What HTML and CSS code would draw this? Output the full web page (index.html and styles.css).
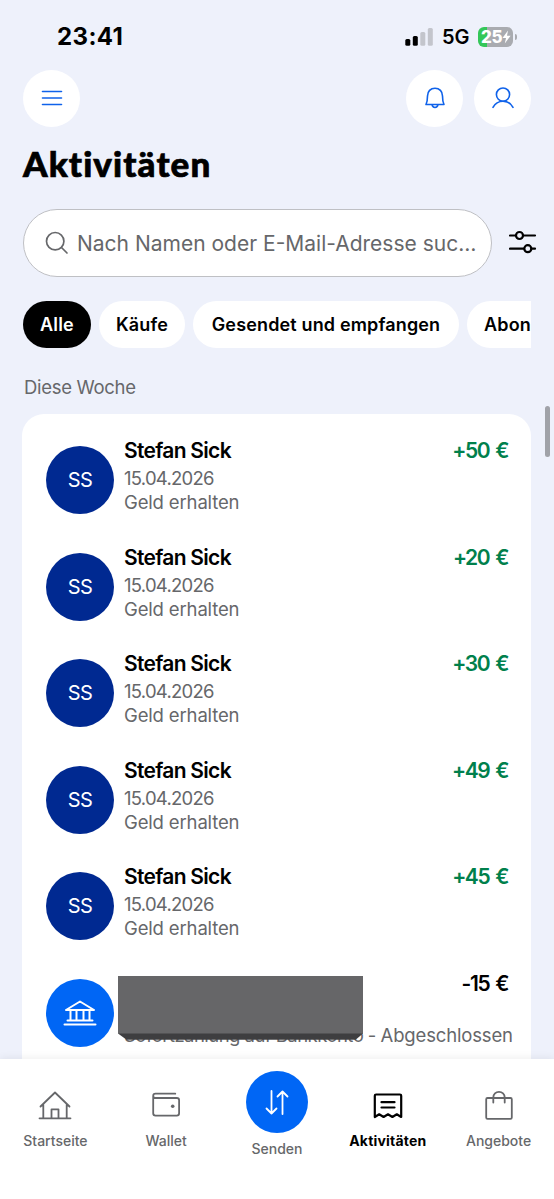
FILE: index.html
```html
<!DOCTYPE html>
<html lang="de">
<head>
    <meta charset="UTF-8">
    <meta name="viewport" content="width=device-width, initial-scale=1.0">
    <title>Aktivitäten</title>
    <link rel="stylesheet" href="styles.css">
</head>
<body>

    <!-- Status bar -->
    <div class="status-bar">
        <span class="time">23:41</span>
        <div class="status-icons">
            <svg class="signal" width="28" height="18" viewBox="0 0 28 18">
                <rect x="0.3" y="11" width="5" height="6.7" rx="1.5" fill="#000"/>
                <rect x="7.8" y="8" width="5" height="9.7" rx="1.5" fill="#000"/>
                <rect x="15.3" y="4" width="5" height="13.7" rx="1.5" fill="#c3c5cc"/>
                <rect x="22.8" y="0" width="5" height="17.7" rx="1.5" fill="#c3c5cc"/>
            </svg>
            <span class="network">5G</span>
            <div class="battery">
                <span class="battery-level">25</span>
                <svg width="9" height="14" viewBox="0 0 9 14"><path d="M6 0.5 0.5 8H4L2.8 13.5 8.6 5.8H5z" fill="#fff"/></svg>
            </div>
            <span class="battery-tip"></span>
        </div>
    </div>

    <!-- Header buttons -->
    <header class="header">
        <button class="round-btn">
            <svg width="24" height="24" viewBox="0 0 24 24"><path d="M2.5 5.5h19M2.5 12h19M2.5 18.5h19"/></svg>
        </button>
        <div class="header-right">
            <button class="round-btn">
                <svg width="24" height="24" viewBox="0 0 24 24"><path d="M3 18.5h18c-1-2-1.5-4.5-1.5-8.5C19.5 5.5 16.5 2.2 12 2.2S4.5 5.5 4.5 10c0 4-.5 6.5-1.5 8.5zM9 18.7c.3 1.8 1.5 2.8 3 2.8s2.7-1 3-2.8"/></svg>
            </button>
            <button class="round-btn">
                <svg width="24" height="24" viewBox="0 0 24 24"><circle cx="12" cy="8.6" r="6.6"/><path d="M2 21.3c2-3.8 5.6-6.1 10-6.1s8 2.3 10 6.1"/></svg>
            </button>
        </div>
    </header>

    <h1 class="title">Aktivitäten</h1>

    <!-- Search -->
    <div class="search-row">
        <div class="search-box">
            <svg width="24" height="24" viewBox="0 0 24 24"><circle cx="10.2" cy="10.2" r="8.7"/><path d="M16.5 16.5l5.5 5.5"/></svg>
            <span class="placeholder">Nach Namen oder E-Mail-Adresse suc…</span>
        </div>
        <svg class="filter-icon" width="28" height="24" viewBox="0 0 28 24">
            <path d="M1 5.5h5.8M14.2 5.5H26M1 18.7h14M22.5 18.7H26"/>
            <circle cx="10.5" cy="5.5" r="3.5"/>
            <circle cx="18.8" cy="18.7" r="3.5"/>
        </svg>
    </div>

    <!-- Filter chips -->
    <div class="chips">
        <button class="chip chip-all active">Alle</button>
        <button class="chip chip-buy">Käufe</button>
        <button class="chip chip-sent">Gesendet und empfangen</button>
        <button class="chip chip-abo">Abon</button>
    </div>

    <h2 class="section-label">Diese Woche</h2>

    <!-- Activity list -->
    <main class="list-area">
        <div class="card">
            <div class="row">
                <div class="avatar">SS</div>
                <div class="info">
                    <div class="name">Stefan Sick</div>
                    <div class="date">15.04.2026</div>
                    <div class="desc">Geld erhalten</div>
                </div>
                <div class="amount">+50 €</div>
            </div>
            <div class="row">
                <div class="avatar">SS</div>
                <div class="info">
                    <div class="name">Stefan Sick</div>
                    <div class="date">15.04.2026</div>
                    <div class="desc">Geld erhalten</div>
                </div>
                <div class="amount">+20 €</div>
            </div>
            <div class="row">
                <div class="avatar">SS</div>
                <div class="info">
                    <div class="name">Stefan Sick</div>
                    <div class="date">15.04.2026</div>
                    <div class="desc">Geld erhalten</div>
                </div>
                <div class="amount">+30 €</div>
            </div>
            <div class="row">
                <div class="avatar">SS</div>
                <div class="info">
                    <div class="name">Stefan Sick</div>
                    <div class="date">15.04.2026</div>
                    <div class="desc">Geld erhalten</div>
                </div>
                <div class="amount">+49 €</div>
            </div>
            <div class="row">
                <div class="avatar">SS</div>
                <div class="info">
                    <div class="name">Stefan Sick</div>
                    <div class="date">15.04.2026</div>
                    <div class="desc">Geld erhalten</div>
                </div>
                <div class="amount">+45 €</div>
            </div>
            <div class="row">
                <div class="avatar bank">
                    <svg width="34" height="28" viewBox="0 0 34 28">
                        <path d="M3 11 17 2.5 31 11zM7.5 11v10.5M13.5 11v10.5M20.5 11v10.5M26.5 11v10.5M4.5 21.5h25M1.5 25.5h31"/>
                    </svg>
                </div>
                <div class="info">
                    <div class="name"></div>
                    <div class="date"></div>
                    <div class="desc bank-desc">Sofortzahlung auf Bankkonto - <span class="state">Abgeschlossen</span></div>
                    <div class="redacted"></div>
                </div>
                <div class="amount minus">-15 €</div>
            </div>
        </div>
        <span class="scrollbar"></span>
    </main>

    <!-- Bottom navigation -->
    <nav class="bottom-nav">
        <a class="nav-item">
            <svg width="34" height="32" viewBox="0 0 34 32"><path d="M1.5 29.3h31M5.3 29.3V15.5M28.7 29.3V15.5M2.5 17.5 17 3.5l14.5 14M13.5 29.3v-9h7v9"/></svg>
            <span class="nav-label">Startseite</span>
        </a>
        <a class="nav-item">
            <svg width="34" height="32" viewBox="0 0 34 32"><path d="M26.3 4.7H6.5a2.3 2.3 0 0 0-2.3 2.3v17.3a2.3 2.3 0 0 0 2.3 2.3h21.3a2.3 2.3 0 0 0 2.3-2.3v-13a2.3 2.3 0 0 0-2.3-2.3H6.2a2 2 0 0 1-2-2"/><circle class="dot" cx="23.7" cy="17.3" r="1.8"/></svg>
            <span class="nav-label">Wallet</span>
        </a>
        <a class="nav-item send">
            <span class="send-btn">
                <svg width="30" height="30" viewBox="0 0 30 30"><path d="M9.5 4v22.5M4.5 21.5l5 5 5-5M20.5 27V4.5M15.5 9.5l5-5 5 5"/></svg>
            </span>
            <span class="nav-label">Senden</span>
        </a>
        <a class="nav-item current">
            <svg width="34" height="32" viewBox="0 0 34 32"><path d="M3.8 28V6.8q0-1.3 1.3-1.3h23.800q1.3 0 1.3 1.3V28l-4.400-2.700-4.400 2.700-4.400-2.700-4.400 2.700-4.400-2.700zM10.500 13.200h13M10.500 18.500h13"/></svg>
            <span class="nav-label">Aktivitäten</span>
        </a>
        <a class="nav-item">
            <svg width="34" height="32" viewBox="0 0 34 32"><path d="M5.5 9h23q1.3 0 1.3 1.3v18.2q0 1.3-1.3 1.3h-23q-1.3 0-1.3-1.3V10.300Q4.200 9 5.500 9zM11.300 13.500V8.500a5.700 5.700 0 0 1 11.400 0v5"/></svg>
            <span class="nav-label">Angebote</span>
        </a>
    </nav>

</body>
</html>
```
FILE: styles.css
```css
* {
    box-sizing: border-box;
}

body {
    margin: 0;
    height: 1199px;
    display: flex;
    flex-direction: column;
    overflow: hidden;
    background-color: #eef1fb;
    color: #000;
    font-family: Inter, "Liberation Sans", sans-serif;
}

button {
    border: none;
    padding: 0;
    font-family: inherit;
    color: inherit;
}

svg {
    fill: none;
    stroke-linecap: round;
    stroke-linejoin: round;
    flex-shrink: 0;
}

/* Status bar */
.status-bar {
    height: 69.5px;
    padding: 4px 37px 0 57px;
    display: flex;
    align-items: center;
    justify-content: space-between;
    flex-shrink: 0;
}

.time {
    font-size: 24px;
    font-weight: 700;
    letter-spacing: 0.4px;
}

.status-icons {
    display: flex;
    align-items: center;
}

.network {
    margin-left: 9px;
    width: 36px;
    font-size: 20px;
    font-weight: 600;
}

.battery {
    width: 35px;
    height: 20px;
    padding-left: 3px;
    display: flex;
    align-items: center;
    border-radius: 6px;
    background: linear-gradient(to right, #34c759 9px, #a9abb0 9px);
}

.battery-level {
    color: #fff;
    font-size: 17px;
    font-weight: 800;
    line-height: 20px;
    letter-spacing: -0.3px;
}

.battery-tip {
    width: 2px;
    height: 6px;
    margin-left: 2px;
    border-radius: 0 2px 2px 0;
    background-color: #a9abb0;
}

/* Header */
.header {
    height: 57px;
    padding: 0 23px;
    display: flex;
    justify-content: space-between;
    flex-shrink: 0;
}

.header-right {
    display: flex;
    gap: 11px;
}

.round-btn {
    width: 57px;
    height: 57px;
    display: flex;
    align-items: center;
    justify-content: center;
    border-radius: 50%;
    background-color: #fff;
}

.round-btn svg {
    stroke: #0f62ea;
    stroke-width: 1.6;
}

.title {
    margin: 16px 0 0 23px;
    height: 40px;
    line-height: 40px;
    font-family: Lato, sans-serif;
    font-size: 35px;
    font-weight: 900;
    font-variant-ligatures: none;
    letter-spacing: 1.1px;
    -webkit-text-stroke: 0.7px #000;
    flex-shrink: 0;
}

/* Search */
.search-row {
    margin: 26.5px 17px 0 23px;
    display: flex;
    align-items: center;
    justify-content: space-between;
    flex-shrink: 0;
}

.search-box {
    width: 469px;
    height: 68px;
    padding-left: 20.5px;
    display: flex;
    align-items: center;
    gap: 8.5px;
    border: 1px solid #bfc0c4;
    border-radius: 34px;
    background-color: #fff;
}

.search-box svg {
    stroke: #66676a;
    stroke-width: 1.7;
}

.placeholder {
    color: #66676a;
    font-size: 21px;
    white-space: nowrap;
}

.filter-icon {
    margin-bottom: 2px;
    stroke: #000;
    stroke-width: 2.2;
}

/* Chips */
.chips {
    margin: 24px 23px 0;
    display: flex;
    gap: 8px;
    overflow: hidden;
    flex-shrink: 0;
}

.chip {
    height: 47px;
    border-radius: 24px;
    background-color: #fff;
    font-size: 18px;
    font-weight: 600;
    letter-spacing: 0.15px;
    white-space: nowrap;
    flex-shrink: 0;
}

.chip.active {
    background-color: #000;
    color: #fff;
}

.chip-all {
    width: 68px;
}

.chip-buy {
    width: 86px;
}

.chip-sent {
    width: 266px;
}

/* Runs off the right edge of the strip */
.chip-abo {
    width: 140px;
    padding-left: 17px;
    text-align: left;
}

.section-label {
    margin: 25px 0 13px 24px;
    color: #66676a;
    font-size: 18.5px;
    font-weight: 400;
    line-height: 28px;
    letter-spacing: -0.3px;
    flex-shrink: 0;
}

/* List */
.list-area {
    position: relative;
    flex: 1;
    min-height: 0;
    padding: 0 23px 0 22px;
}

.card {
    height: 100%;
    padding: 22.3px 22px 0 24px;
    border-radius: 22px 22px 0 0;
    background-color: #fff;
    overflow: hidden;
}

.row {
    height: 106.5px;
    display: flex;
}

.avatar {
    width: 68px;
    height: 68px;
    margin: 10px 10px 0 0;
    display: flex;
    align-items: center;
    justify-content: center;
    border-radius: 50%;
    background-color: #002991;
    color: #fff;
    font-size: 20px;
    letter-spacing: -0.7px;
    flex-shrink: 0;
}

.avatar.bank {
    background-color: #0066f5;
}

.avatar svg {
    stroke: #fff;
    stroke-width: 2;
}

.info {
    position: relative;
    flex: 1;
    min-width: 0;
    white-space: nowrap;
}

.name {
    height: 30px;
    line-height: 30px;
    font-size: 21px;
    font-weight: 600;
    letter-spacing: -0.7px;
}

.date,
.desc {
    height: 24px;
    line-height: 24px;
    color: #66676a;
    font-size: 18.5px;
    letter-spacing: -0.15px;
}

.date {
    letter-spacing: -0.75px;
}

.bank-desc {
    letter-spacing: -0.54px;
}

.bank-desc .state {
    letter-spacing: -0.15px;
}

.amount {
    color: #00804c;
    font-size: 21px;
    font-weight: 600;
    line-height: 30px;
    letter-spacing: -1.4px;
    word-spacing: 2px;
    margin-right: 1px;
}

.amount.minus {
    color: #000;
}

/* Covers the recipient of the transfer */
.redacted {
    position: absolute;
    top: 7px;
    left: -6px;
    width: 245px;
    height: 64px;
    background: linear-gradient(to bottom, #666668 57px, #3e3e40 58px);
    clip-path: polygon(0 0, 100% 0, 100% 90%, 97% 100%, 3.5% 100%, 0 90%);
}

.scrollbar {
    position: absolute;
    top: -8px;
    right: 4px;
    width: 5px;
    height: 51px;
    border-radius: 3px;
    background-color: #a0a2a8;
}

/* Bottom navigation */
.bottom-nav {
    position: relative;
    height: 140px;
    padding-top: 12px;
    display: flex;
    flex-shrink: 0;
    background-color: #fff;
    box-shadow: 0 -1px 8px rgba(0, 0, 0, 0.07);
}

.nav-item {
    flex: 1;
    display: flex;
    flex-direction: column;
    align-items: center;
    padding-top: 18px;
    color: #66676a;
}

.nav-item svg {
    stroke: currentColor;
    stroke-width: 1.8;
}

.nav-item .dot {
    fill: currentColor;
    stroke: none;
}

.nav-label {
    margin-top: 10px;
    font-size: 14px;
    font-weight: 500;
    line-height: 20px;
}

.nav-item.send {
    padding-top: 0;
}

.send-btn {
    width: 62px;
    height: 62px;
    display: flex;
    align-items: center;
    justify-content: center;
    border-radius: 50%;
    background-color: #0066f5;
    color: #fff;
}

.send .nav-label {
    margin-top: 6px;
}

.nav-item.current {
    color: #000;
}

.current svg {
    stroke-width: 2.2;
}

.current .nav-label {
    font-weight: 700;
    letter-spacing: 0.2px;
}
```
